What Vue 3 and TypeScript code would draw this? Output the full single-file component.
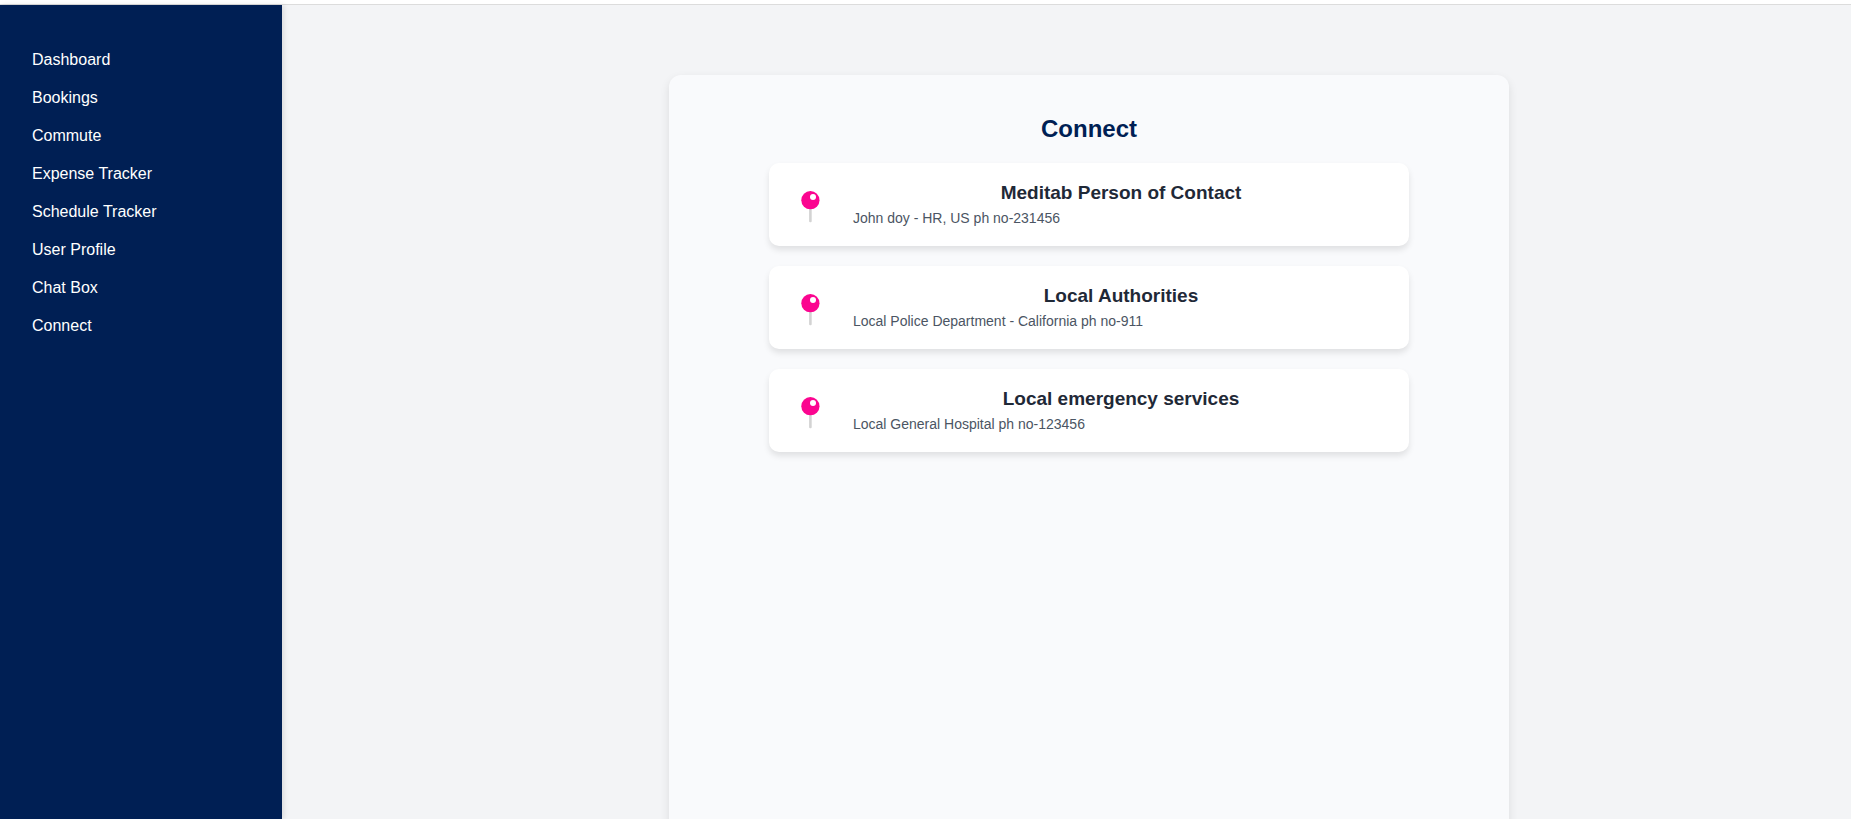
<script setup lang="ts">
interface Contact {
  title: string
  detail: string
}

const links: string[] = [
  'Dashboard',
  'Bookings',
  'Commute',
  'Expense Tracker',
  'Schedule Tracker',
  'User Profile',
  'Chat Box',
  'Connect',
]

const contacts: Contact[] = [
  { title: 'Meditab Person of Contact', detail: 'John doy - HR, US ph no-231456' },
  { title: 'Local Authorities', detail: 'Local Police Department - California ph no-911' },
  { title: 'Local emergency services', detail: 'Local General Hospital ph no-123456' },
]
</script>

<template>
  <div class="app">
    <header class="topbar"></header>
    <div class="body">
      <nav class="sidebar" aria-label="Main">
        <ul class="menu">
          <li v-for="link in links" :key="link">
            <a class="menu-link" href="#">{{ link }}</a>
          </li>
        </ul>
      </nav>
      <main class="content">
        <section class="panel">
          <h1 class="heading">Connect</h1>
          <ul class="cards">
            <li v-for="contact in contacts" :key="contact.title" class="card">
              <svg class="pin" viewBox="0 0 44 44" aria-hidden="true">
                <rect x="20.1" y="22" width="2.6" height="17.3" rx="1" fill="#d3d3d3" />
                <circle cx="21.4" cy="17.2" r="9.1" fill="#fb0590" />
                <circle cx="24" cy="14.1" r="3" fill="#fff" />
              </svg>
              <div class="info">
                <h2 class="title">{{ contact.title }}</h2>
                <p class="detail">{{ contact.detail }}</p>
              </div>
            </li>
          </ul>
        </section>
      </main>
    </div>
  </div>
</template>

<style>
body {
  margin: 0;
}
</style>

<style scoped>
.app {
  display: flex;
  flex-direction: column;
  height: 100vh;
  overflow: hidden;
  background: #f3f4f6;
  font-family: Arial, "Liberation Sans", sans-serif;
}

.topbar {
  flex: none;
  height: 4px;
  background: #fff;
  border-bottom: 1px solid #dcdcdc;
}

.body {
  display: flex;
  flex: 1;
  min-height: 0;
}

.sidebar {
  box-sizing: border-box;
  flex: none;
  width: 282px;
  padding: 36px 32px;
  background: #001f54;
  box-shadow: 2px 0 5px rgba(0, 0, 0, 0.1);
}

.menu,
.cards {
  margin: 0;
  padding: 0;
  list-style: none;
}

.menu {
  display: flex;
  flex-direction: column;
}

.menu-link {
  display: block;
  padding: 10px 0;
  color: #fff;
  font-size: 16px;
  line-height: 18px;
  text-decoration: none;
}

.content {
  flex: 1;
  min-width: 0;
  padding: 70px 0 0 45px;
}

.panel {
  box-sizing: border-box;
  max-width: 840px;
  min-height: 100vh;
  margin: 0 auto;
  padding: 40px 100px;
  background: #f9fafc;
  border-radius: 12px;
  box-shadow: 0 4px 10px rgba(0, 0, 0, 0.1);
}

.heading {
  margin: 0 0 20px;
  color: #001f54;
  font-size: 24px;
  line-height: 28px;
  text-align: center;
}

.cards {
  display: flex;
  flex-direction: column;
  gap: 20px;
}

.card {
  display: flex;
  align-items: center;
  gap: 20px;
  padding: 16px 20px;
  background: #fff;
  border-radius: 10px;
  box-shadow: 0 4px 6px rgba(0, 0, 0, 0.1);
}

.pin {
  flex: none;
  width: 44px;
  height: 44px;
}

.info {
  flex: 1;
  min-width: 0;
  padding-bottom: 3px;
}

.title {
  margin: 0 0 2px;
  color: #1f2937;
  font-size: 19px;
  line-height: 28px;
  text-align: center;
}

.detail {
  margin: 0;
  color: #4b5563;
  font-size: 14px;
  line-height: 18px;
}
</style>
